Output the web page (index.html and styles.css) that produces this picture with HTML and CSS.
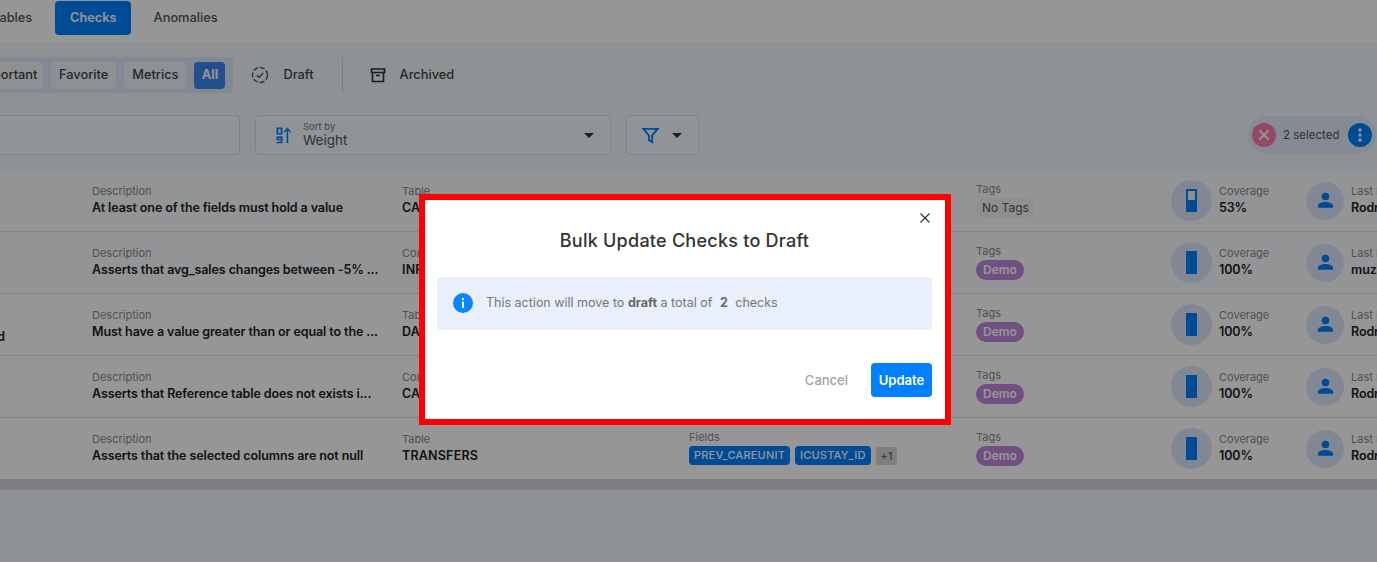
FILE: index.html
```html
<!DOCTYPE html>
<html lang="en">
<head>
  <meta charset="UTF-8">
  <title>Checks</title>
  <link rel="stylesheet" href="styles.css">
</head>
<body>
  <nav class="tabs">
    <span class="tab tab-cut">Tables</span>
    <span class="tab tab-active">Checks</span>
    <span class="tab">Anomalies</span>
  </nav>

  <main class="content">
    <div class="status-bar">
      <div class="status-group">
        <span class="status-btn status-cut">Important</span>
        <span class="status-btn">Favorite</span>
        <span class="status-btn">Metrics</span>
        <span class="status-btn status-active">All</span>
      </div>
      <span class="status-link status-draft">
        <svg width="20" height="20" viewBox="0 0 20 20" fill="none" stroke="#4a5878" stroke-width="1.4">
          <circle cx="10" cy="10" r="7.5" stroke-dasharray="5 2"/>
          <path d="M6.8 10.2l2.3 2.3 4.2-4.6"/>
        </svg>
        Draft
      </span>
      <span class="status-divider"></span>
      <span class="status-link status-archived">
        <svg width="18" height="18" viewBox="0 0 18 18" fill="none" stroke="#2c2c2c" stroke-width="1.6">
          <path d="M2.5 3h13v3.5h-13zM3.5 6.5V15.500h11V6.500M7 9.500h4"/>
        </svg>
        Archived
      </span>
    </div>

    <div class="filter-bar">
      <div class="search-box"></div>
      <div class="sort-box">
        <svg width="20" height="20" viewBox="0 0 20 20" fill="#0080ff">
          <path d="M12.600 18V5.500L10 8V6.200L13.400 2.500l3.400 3.700V8l-2.600-2.500V18z"/>
          <path fill-rule="evenodd" d="M2.500 2.500h6v7h-6zM4.300 4.100v3.800h2.400V4.100zM2.500 11.200h6v7h-6v-1.500h4.200v-1.500h-4.200zM4.300 12.700v1h2.400v-1z"/>
        </svg>
        <div class="sort-text">
          <span class="sort-label">Sort by</span>
          <span class="sort-value">Weight</span>
        </div>
        <span class="caret"></span>
      </div>
      <div class="filter-box">
        <svg width="19" height="19" viewBox="0 0 20 20" fill="none" stroke="#0080ff" stroke-width="2">
          <path d="M2.500 3h15l-5.800 7v7l-3.400-2v-5z"/>
        </svg>
        <span class="caret"></span>
      </div>
      <div class="selected-pill">
        <span class="pill-icon pill-close">
          <svg width="12" height="12" viewBox="0 0 12 12" stroke="#fff" stroke-width="1.800"><path d="M1.500 1.500l9 9M10.500 1.500l-9 9"/></svg>
        </span>
        <span class="pill-text">2 selected</span>
        <span class="pill-icon pill-more">
          <svg width="4" height="14" viewBox="0 0 4 14" fill="#fff"><circle cx="2" cy="2" r="1.700"/><circle cx="2" cy="7" r="1.700"/><circle cx="2" cy="12" r="1.700"/></svg>
        </span>
      </div>
    </div>

    <section class="rows">
      <div class="row row-selected">
        <div class="cell-first"></div>
        <div class="cell"><span class="label">Description</span><span class="value">At least one of the fields must hold a value</span></div>
        <div class="cell"><span class="label">Table</span><span class="value value-plain">CALLOUT</span></div>
        <div class="cell cell-up"><span class="label">Fields</span></div>
        <div class="cell cell-tags"><span class="label">Tags</span><span class="no-tags">No Tags</span></div>
        <div class="coverage">
          <span class="round round-big"><span class="bar"><span class="bar-empty bar-half"></span></span></span>
          <div class="cell"><span class="label">Coverage</span><span class="value">53%</span></div>
        </div>
        <div class="editor">
          <span class="round"><svg class="person" width="19" height="19" viewBox="0 0 20 20"><use href="#person-icon"/></svg></span>
          <div class="cell"><span class="label">Last Editor</span><span class="value">Rodrigo</span></div>
        </div>
      </div>

      <div class="row row-selected">
        <div class="cell-first"></div>
        <div class="cell"><span class="label">Description</span><span class="value">Asserts that avg_sales changes between -5% ...</span></div>
        <div class="cell"><span class="label">Computed</span><span class="value value-plain">INPUT</span></div>
        <div class="cell cell-up"><span class="label">Fields</span></div>
        <div class="cell cell-tags"><span class="label">Tags</span><span class="tag">Demo</span></div>
        <div class="coverage">
          <span class="round round-big"><span class="bar"></span></span>
          <div class="cell"><span class="label">Coverage</span><span class="value">100%</span></div>
        </div>
        <div class="editor">
          <span class="round"><svg class="person" width="19" height="19" viewBox="0 0 20 20"><use href="#person-icon"/></svg></span>
          <div class="cell"><span class="label">Last Editor</span><span class="value">muzammil</span></div>
        </div>
      </div>

      <div class="row">
        <div class="cell-first"><span class="value cut-name">Expected</span></div>
        <div class="cell"><span class="label">Description</span><span class="value">Must have a value greater than or equal to the ...</span></div>
        <div class="cell"><span class="label">Table</span><span class="value value-plain">DATA</span></div>
        <div class="cell cell-up"><span class="label">Fields</span></div>
        <div class="cell cell-tags"><span class="label">Tags</span><span class="tag">Demo</span></div>
        <div class="coverage">
          <span class="round round-big"><span class="bar"></span></span>
          <div class="cell"><span class="label">Coverage</span><span class="value">100%</span></div>
        </div>
        <div class="editor">
          <span class="round"><svg class="person" width="19" height="19" viewBox="0 0 20 20"><use href="#person-icon"/></svg></span>
          <div class="cell"><span class="label">Last Editor</span><span class="value">Rodrigo</span></div>
        </div>
      </div>

      <div class="row">
        <div class="cell-first"></div>
        <div class="cell"><span class="label">Description</span><span class="value">Asserts that Reference table does not exists i...</span></div>
        <div class="cell"><span class="label">Computed</span><span class="value value-plain">CALLOUT</span></div>
        <div class="cell cell-up"><span class="label">Fields</span></div>
        <div class="cell cell-tags"><span class="label">Tags</span><span class="tag">Demo</span></div>
        <div class="coverage">
          <span class="round round-big"><span class="bar"></span></span>
          <div class="cell"><span class="label">Coverage</span><span class="value">100%</span></div>
        </div>
        <div class="editor">
          <span class="round"><svg class="person" width="19" height="19" viewBox="0 0 20 20"><use href="#person-icon"/></svg></span>
          <div class="cell"><span class="label">Last Editor</span><span class="value">Rodrigo</span></div>
        </div>
      </div>

      <div class="row row-last">
        <div class="cell-first"></div>
        <div class="cell"><span class="label">Description</span><span class="value">Asserts that the selected columns are not null</span></div>
        <div class="cell"><span class="label">Table</span><span class="value value-plain">TRANSFERS</span></div>
        <div class="cell cell-up">
          <span class="label">Fields</span>
          <div class="chips">
            <span class="chip">PREV_CAREUNIT</span>
            <span class="chip">ICUSTAY_ID</span>
            <span class="chip-more">+1</span>
          </div>
        </div>
        <div class="cell cell-tags"><span class="label">Tags</span><span class="tag">Demo</span></div>
        <div class="coverage">
          <span class="round round-big"><span class="bar"></span></span>
          <div class="cell"><span class="label">Coverage</span><span class="value">100%</span></div>
        </div>
        <div class="editor">
          <span class="round"><svg class="person" width="19" height="19" viewBox="0 0 20 20"><use href="#person-icon"/></svg></span>
          <div class="cell"><span class="label">Last Editor</span><span class="value">Rodrigo</span></div>
        </div>
      </div>
      <div class="scrollbar"></div>
    </section>
  </main>

  <svg class="icon-defs" width="0" height="0">
    <symbol id="person-icon" viewBox="0 0 20 20">
      <circle cx="10" cy="5.800" r="4"/>
      <path d="M2 17.500v-1.600c0-2.800 4.500-4.200 8-4.200s8 1.400 8 4.200v1.600z"/>
    </symbol>
  </svg>

  <div class="overlay">
    <div class="modal">
      <button class="modal-close">
        <svg width="10" height="10" viewBox="0 0 10 10" stroke="#333" stroke-width="1.200"><path d="M.5.500l9 9M9.500.500l-9 9"/></svg>
      </button>
      <h2 class="modal-title">Bulk Update Checks to Draft</h2>
      <div class="alert">
        <svg width="20" height="20" viewBox="0 0 20 20">
          <circle cx="10" cy="10" r="10" fill="#0a84ff"/>
          <rect x="9" y="8.500" width="2" height="6.500" fill="#fff"/>
          <rect x="9" y="5" width="2" height="2" fill="#fff"/>
        </svg>
        <p class="alert-text">This action will move to <b>draft</b> a total of <b class="count">2</b> checks</p>
      </div>
      <div class="modal-actions">
        <span class="btn-cancel">Cancel</span>
        <span class="btn-update">Update</span>
      </div>
    </div>
  </div>
</body>
</html>
```
FILE: styles.css
```css
* {
  box-sizing: border-box;
}

html, body {
  height: 100%;
}

body {
  margin: 0;
  overflow: hidden;
  font-family: Inter, "Liberation Sans", sans-serif;
  background-color: #f1f8fd;
  color: #222;
}

/* top tabs */
.tabs {
  display: flex;
  align-items: center;
  gap: 8px;
  height: 42px;
  padding: 0 0 6px 0;
  margin-left: -16px;
  background-color: #fff;
}

.tab {
  padding: 0 15px;
  height: 34px;
  line-height: 33px;
  font-size: 12.800px;
  font-weight: 500;
  color: #555;
  border-radius: 4px;
}

.tab-active {
  padding-right: 14px;
  background-color: #0080ff;
  color: #fff;
  font-weight: 600;
}

.tab-cut {
  width: 63px;
  padding: 0 0 0 8px;
}

/* status buttons */
.status-bar {
  display: flex;
  align-items: center;
  height: 36px;
  margin-top: 15px;
}

.status-group {
  display: flex;
  gap: 8px;
  align-items: center;
  height: 36px;
  padding: 0 8px 0 0;
  margin-left: -30px;
  background-color: #dde9f8;
  border-radius: 4px;
}

.status-btn {
  height: 27px;
  line-height: 25px;
  padding: 0 8px;
  font-size: 12.800px;
  font-weight: 500;
  color: #444;
  background-color: #f0f6fb;
  border-radius: 4px;
}

.status-cut {
  width: 73px;
  text-align: right;
}

.status-active {
  width: 31px;
  padding: 0;
  text-align: center;
  background-color: #3d86f0;
  color: #fff;
  font-weight: 700;
}

.status-link {
  display: flex;
  align-items: center;
  font-size: 12.800px;
  line-height: 14px;
  font-weight: 500;
  color: #444;
}

.status-draft {
  gap: 13px;
  margin-left: 17px;
}

.status-archived {
  gap: 13px;
  margin-left: 26px;
}

.status-divider {
  width: 1px;
  height: 36px;
  margin-left: 28px;
  background-color: #d5dade;
}

/* search, sort, filter */
.filter-bar {
  display: flex;
  align-items: center;
  height: 40px;
  margin-top: 22px;
}

.search-box,
.sort-box,
.filter-box {
  height: 40px;
  border: 1px solid #dcdfe2;
  border-radius: 4px;
  background-color: #f5fbff;
}

.search-box {
  width: 250px;
  margin-left: -10px;
}

.sort-box {
  display: flex;
  align-items: center;
  width: 356px;
  margin-left: 15px;
  padding: 0 16px 0 18px;
}

.sort-text {
  display: flex;
  flex-direction: column;
  flex: 1;
  margin-left: 9px;
}

.sort-label {
  font-size: 9.500px;
  line-height: 11px;
  color: #777;
}

.sort-value {
  font-size: 13.500px;
  line-height: 17px;
  color: #555;
}

.caret {
  width: 0;
  height: 0;
  border-left: 5px solid transparent;
  border-right: 5px solid transparent;
  border-top: 5px solid #333;
}

.filter-box {
  display: flex;
  align-items: center;
  gap: 12px;
  width: 73px;
  margin-left: 15px;
  padding-left: 14px;
}

.selected-pill {
  display: flex;
  align-items: center;
  width: 128px;
  height: 38px;
  margin-left: auto;
  margin-right: 1px;
  padding: 0 4px;
  background-color: #e0ecfb;
  border-radius: 19px;
}

.pill-icon {
  display: flex;
  align-items: center;
  justify-content: center;
  width: 24px;
  height: 24px;
  border-radius: 50%;
}

.pill-close {
  background-color: #f97cb0;
}

.pill-more {
  background-color: #0080ff;
}

.pill-text {
  flex: 1;
  padding-left: 7px;
  font-size: 11.500px;
  color: #555;
}

/* check rows */
.rows {
  margin-top: 15px;
}

.row {
  display: grid;
  grid-template-columns: 92px 310px 287px 287px 195px 135px 1fr;
  align-items: center;
  height: 62px;
  background-color: #fff;
  border-bottom: 1px solid #dfe1e3;
}

.row-selected {
  background-color: #f8fbff;
}

.row-last {
  height: 61px;
  border-bottom: 0;
}

.cell {
  display: flex;
  flex-direction: column;
  align-items: flex-start;
  gap: 2px;
  margin-top: -2px;
  white-space: nowrap;
  min-width: 0;
}

.cell-up {
  margin-top: -2px;
}

.cell-tags {
  margin-top: -2px;
}

.cell-first {
  overflow: hidden;
  align-self: end;
  padding-bottom: 10px;
  display: flex;
  justify-content: flex-end;
  padding-right: 87px;
}

.cut-name {
  flex-shrink: 0;
}

.label {
  font-size: 11px;
  line-height: 14px;
  color: #8a8a8a;
}

.value {
  font-size: 12.500px;
  line-height: 16px;
  font-weight: 600;
  letter-spacing: -0.1px;
  color: #222;
}

.value-plain {
  letter-spacing: 0.2px;
}

.no-tags {
  height: 20px;
  line-height: 20px;
  padding: 0 6px;
  font-size: 12px;
  color: #555;
  background-color: #f3f3f3;
  border-radius: 10px;
}

.tag {
  height: 20px;
  line-height: 20px;
  padding: 0 7px;
  font-size: 12px;
  font-weight: 600;
  color: #fff;
  background-color: #bd88da;
  border-radius: 10px;
}

.chips {
  display: flex;
  align-items: center;
  gap: 5px;
}

.chip {
  height: 19px;
  line-height: 19px;
  padding: 0 5px;
  font-size: 11px;
  font-weight: 500;
  letter-spacing: 0.2px;
  color: #fff;
  background-color: #0080ff;
  border-radius: 4px;
}

.chip-more {
  height: 18px;
  line-height: 18px;
  padding: 0 5px;
  font-size: 11px;
  color: #555;
  background-color: #d9d9d9;
  border-radius: 3px;
}

.coverage,
.editor {
  display: flex;
  align-items: center;
  gap: 7px;
}

.round {
  display: flex;
  align-items: center;
  justify-content: center;
  flex-shrink: 0;
  width: 38px;
  height: 38px;
  border-radius: 50%;
  background-color: #dce8fb;
}

.round-big {
  width: 41px;
  height: 41px;
}

.bar {
  width: 11px;
  height: 23px;
  padding-top: 2px;
  background-color: #0080ff;
}

.bar-empty {
  display: block;
  margin: 0 2px;
  background-color: #eef3f8;
}

.bar-half {
  height: 9px;
}

.person {
  fill: #0080ff;
}

.icon-defs {
  position: absolute;
}

.scrollbar {
  height: 11px;
  background-color: #d7d7da;
}

/* modal over the dimmed page */
.overlay {
  position: fixed;
  top: 0;
  left: 0;
  right: 0;
  bottom: 0;
  display: flex;
  justify-content: center;
  align-items: flex-start;
  padding: 194px 7px 0 0;
  background-color: rgba(0, 0, 0, 0.41);
}

.modal {
  position: relative;
  width: 532px;
  height: 231px;
  padding: 0 13px 0 12px;
  border: 6px solid #f00;
  background-color: #fff;
}

.modal-close {
  position: absolute;
  top: 13px;
  right: 15px;
  display: flex;
  padding: 0;
  border: 0;
  background: none;
}

.modal-title {
  margin: 28px 0 0;
  font-size: 18px;
  line-height: 26px;
  font-weight: 500;
  letter-spacing: 0.25px;
  color: #333;
  text-align: center;
}

.alert {
  display: flex;
  align-items: center;
  gap: 13px;
  height: 53px;
  margin-top: 23px;
  padding: 0 0 2px 16px;
  background-color: #e9effb;
  border-radius: 4px;
}

.alert-text {
  margin: 0;
  font-size: 12.500px;
  color: #777;
}

.alert-text b {
  font-weight: 700;
  color: #666;
}

.count {
  margin: 0 4px;
}

.modal-actions {
  display: flex;
  justify-content: flex-end;
  align-items: center;
  gap: 23px;
  margin-top: 33px;
}

.btn-cancel {
  font-size: 13px;
  font-weight: 500;
  color: #a3a3a3;
}

.btn-update {
  width: 61px;
  height: 34px;
  line-height: 34px;
  text-align: center;
  font-size: 13px;
  font-weight: 600;
  color: #fff;
  background-color: #0080ff;
  border-radius: 4px;
}
```
